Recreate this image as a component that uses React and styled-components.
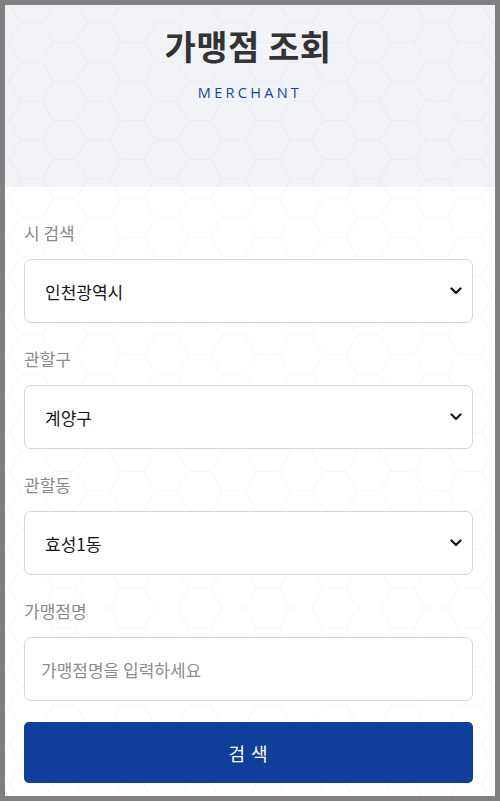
import React from "react"
import styled, { createGlobalStyle } from "styled-components"

const S = 22.5
const H = 39
const hexTile = `<svg xmlns='http://www.w3.org/2000/svg' width='${S * 3}' height='${H}'><path d='M0 ${H / 2} L${S / 2} 0 L${S * 1.5} 0 L${S * 2} ${H / 2} L${S * 1.5} ${H} L${S / 2} ${H} Z M${S * 2} ${H / 2} L${S * 3} ${H / 2}' fill='none' stroke='rgba(0,0,0,0.028)' stroke-width='1'/></svg>`
const hexUrl = `url("data:image/svg+xml,${encodeURIComponent(hexTile)}")`

const chevron = `<svg xmlns='http://www.w3.org/2000/svg' width='12' height='8' viewBox='0 0 12 8'><path d='M1.5 1.5 L6 6 L10.5 1.5' fill='none' stroke='%23111' stroke-width='2.2' stroke-linecap='round' stroke-linejoin='round'/></svg>`
const chevronUrl = `url("data:image/svg+xml,${chevron.replace(/</g, "%3C").replace(/>/g, "%3E")}")`

const GlobalStyle = createGlobalStyle`
    * { box-sizing: border-box; }
    html, body {
        margin: 0;
        padding: 0;
        background: #808080;
    }
    body {
        font-family: "Noto Sans CJK KR", "Noto Sans", sans-serif;
    }
`

const Frame = styled.div`
    padding: 5px;
    min-height: 801px;
`

const Card = styled.div`
    display: flex;
    flex-direction: column;
    height: 791px;
    background: #fff;
    overflow: hidden;
`

const Header = styled.header`
    height: 182px;
    display: flex;
    flex-direction: column;
    align-items: center;
    padding-top: 20px;
    background-color: #f1f3f7;
    background-image: ${hexUrl};
    background-attachment: fixed;
    background-position: 8.75px 23px;
`

const Title = styled.h1`
    margin: 0;
    font-size: 34px;
    line-height: 42px;
    font-weight: 700;
    letter-spacing: 0.5px;
    color: #333;
    padding-right: 4px;
`

const Subtitle = styled.div`
    margin-top: 16px;
    font-family: "Open Sans", "Noto Sans", sans-serif;
    font-size: 14.5px;
    line-height: 20px;
    letter-spacing: 3.3px;
    color: #1d44a3;
`

const Body = styled.main`
    flex: 1;
    display: flex;
    flex-direction: column;
    gap: 24px;
    padding: 34px 22px 12px 19px;
    background-color: #fff;
    background-image: ${hexUrl};
    background-attachment: fixed;
    background-position: 8.75px 23px;
`

const Field = styled.div`
    display: flex;
    flex-direction: column;
    gap: 14px;
`

const Label = styled.label`
    font-size: 17px;
    line-height: 24px;
    color: #8a8a8a;
`

const boxStyle = `
    width: 100%;
    height: 64px;
    border: 1px solid #d3d6dd;
    border-radius: 7px;
    background-color: #fff;
    font-family: "Noto Sans CJK KR", "Noto Sans", sans-serif;
    font-size: 17px;
    outline: none;
`

const Select = styled.select`
    ${boxStyle}
    appearance: none;
    -webkit-appearance: none;
    padding: 0 40px 0 20px;
    color: #161616;
    background-image: ${chevronUrl};
    background-repeat: no-repeat;
    background-position: right 10px center;
    background-size: 12px 8px;
`

const Input = styled.input`
    ${boxStyle}
    padding: 0 16px;
    color: #161616;
    &::placeholder {
        color: #8d8d8d;
    }
`

const SearchButton = styled.button`
    margin-top: -3px;
    height: 61px;
    width: 100%;
    border: none;
    border-radius: 5px;
    background: #0d3f9b;
    color: #fff;
    font-family: "Noto Sans CJK KR", "Noto Sans", sans-serif;
    font-size: 18px;
    letter-spacing: 1px;
    cursor: pointer;
`

const fields = [
    { label: "시 검색", value: "인천광역시" },
    { label: "관할구", value: "계양구" },
    { label: "관할동", value: "효성1동" },
]

export default function App() {
    return (
        <Frame>
            <GlobalStyle />
            <Card>
                <Header>
                    <Title>가맹점 조회</Title>
                    <Subtitle>MERCHANT</Subtitle>
                </Header>
                <Body>
                    {fields.map((f) => (
                        <Field key={f.label}>
                            <Label>{f.label}</Label>
                            <Select defaultValue={f.value}>
                                <option value={f.value}>{f.value}</option>
                            </Select>
                        </Field>
                    ))}
                    <Field>
                        <Label>가맹점명</Label>
                        <Input placeholder="가맹점명을 입력하세요" />
                    </Field>
                    <SearchButton>검 색</SearchButton>
                </Body>
            </Card>
        </Frame>
    )
}
